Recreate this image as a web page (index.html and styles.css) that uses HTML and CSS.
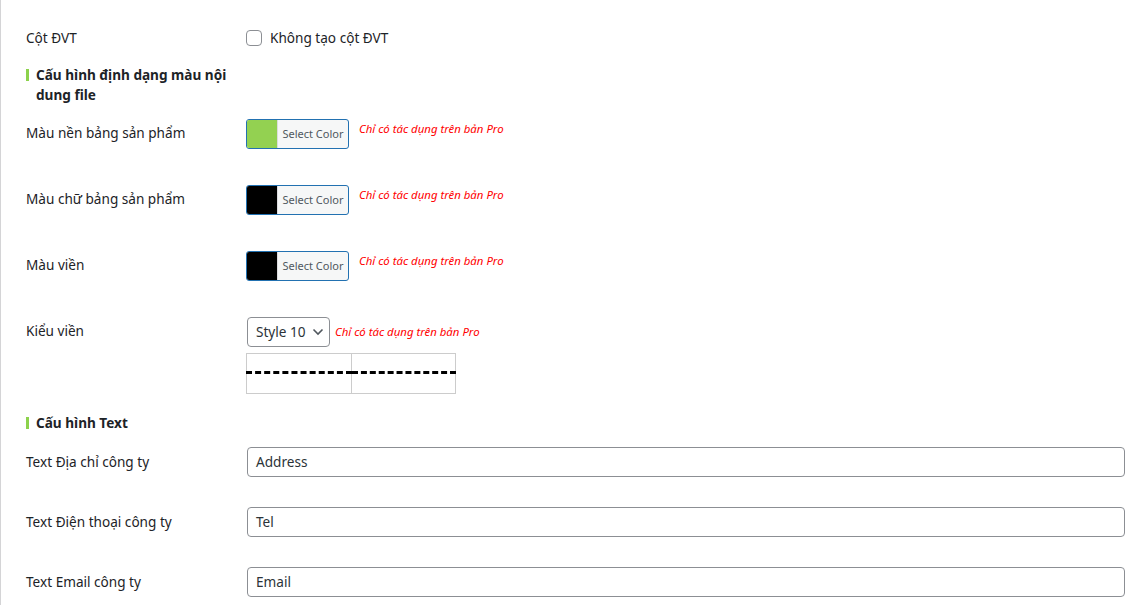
FILE: index.html
```html
<!DOCTYPE html>
<html lang="vi">
<head>
<meta charset="utf-8">
<link rel="stylesheet" href="styles.css">
</head>
<body>
<div class="page">
  <div class="row row-check">
    <div class="label">Cột ĐVT</div>
    <div class="field">
      <label class="check"><span class="box"></span><span>Không tạo cột ĐVT</span></label>
    </div>
  </div>

  <div class="heading heading-1"><span class="bar"></span><span class="heading-text">Cấu hình định dạng màu nội dung file</span></div>

  <div class="row row-color">
    <div class="label">Màu nền bảng sản phẩm</div>
    <div class="field">
      <button class="color-btn"><span class="swatch swatch-green"></span><span class="color-text">Select Color</span></button>
      <span class="pro">Chỉ có tác dụng trên bản Pro</span>
    </div>
  </div>

  <div class="row row-color">
    <div class="label">Màu chữ bảng sản phẩm</div>
    <div class="field">
      <button class="color-btn"><span class="swatch swatch-black"></span><span class="color-text">Select Color</span></button>
      <span class="pro">Chỉ có tác dụng trên bản Pro</span>
    </div>
  </div>

  <div class="row row-color">
    <div class="label">Màu viền</div>
    <div class="field">
      <button class="color-btn"><span class="swatch swatch-black"></span><span class="color-text">Select Color</span></button>
      <span class="pro">Chỉ có tác dụng trên bản Pro</span>
    </div>
  </div>

  <div class="row row-style">
    <div class="label">Kiểu viền</div>
    <div class="field field-col">
      <div class="select-line">
        <div class="select">Style 10
          <svg class="chev" width="12" height="8" viewBox="0 0 12 8"><path d="M1.5 1.5 L6 6 L10.5 1.5" fill="none" stroke="#50575e" stroke-width="1.6"/></svg>
        </div>
        <span class="pro pro-inline">Chỉ có tác dụng trên bản Pro</span>
      </div>
      <table class="preview">
        <tr class="r1"><td></td><td></td></tr>
        <tr class="r2"><td></td><td></td></tr>
      </table>
    </div>
  </div>

  <div class="heading heading-2"><span class="bar"></span><span class="heading-text">Cấu hình Text</span></div>

  <div class="row row-text">
    <div class="label">Text Địa chỉ công ty</div>
    <div class="field"><div class="input">Address</div></div>
  </div>
  <div class="row row-text">
    <div class="label">Text Điện thoại công ty</div>
    <div class="field"><div class="input">Tel</div></div>
  </div>
  <div class="row row-text">
    <div class="label">Text Email công ty</div>
    <div class="field"><div class="input">Email</div></div>
  </div>
</div>
</body>
</html>
```

FILE: styles.css
```css
* { box-sizing: border-box; }
html, body { margin: 0; padding: 0; background: #fff; }
body {
  font-family: "Noto Sans", "Open Sans", sans-serif;
  font-size: 13.6px;
  color: #1d2327;
  overflow: hidden;
}
.page {
  border-left: 1px solid #d4d4d6;
  height: 605px;
  padding-left: 25px;
  padding-right: 6px;
}
.row {
  display: flex;
}
.label {
  width: 220px;
  flex: none;
  line-height: 20px;
  padding-right: 10px;
}
.field {
  flex: 1;
  display: flex;
  align-items: flex-start;
}
.row-check { padding-top: 28px; height: 48px; }
.check { display: flex; align-items: center; gap: 8px; line-height: 20px; }
.box {
  width: 16px; height: 16px;
  border: 1px solid #8c8f94;
  border-radius: 4px;
  background: #fff;
}
.heading {
  display: flex;
  align-items: flex-start;
  font-weight: 700;
  line-height: 20px;
  width: 210px;
}
.heading-1 { margin-top: 17px; }
.heading-2 { margin-top: 19px; }
.bar {
  width: 3px;
  height: 12px;
  background: #8cd24c;
  margin-top: 4px;
  margin-right: 7px;
  flex: none;
}
.row-color { height: 66px; padding-top: 14px; }
.row-color .label { padding-top: 4px; }
.color-btn {
  display: flex;
  height: 30px;
  width: 103px;
  padding: 0;
  border: 1px solid #2271b1;
  border-radius: 3px;
  background: #f6f7f7;
  overflow: hidden;
  font-family: inherit;
}
.swatch { width: 30px; height: 100%; flex: none; }
.swatch-green { background: #93d151; }
.swatch-black { background: #000; }
.color-text {
  flex: 1;
  border-left: 1px solid #dcdcde;
  font-size: 11px;
  line-height: 28px;
  color: #50575e;
  text-align: center;
}
.pro {
  color: #ff0000;
  font-style: italic;
  font-size: 11.4px;
  line-height: 16px;
  margin-left: 10px;
  margin-top: 2px;
}
.row-style { padding-top: 14px; }
.row-style .label { padding-top: 4px; }
.field-col { flex-direction: column; }
.select-line { display: flex; align-items: center; margin-left: 1px; }
.select {
  height: 30px;
  width: 83px;
  border: 1px solid #8c8f94;
  border-radius: 4px;
  padding-left: 8px;
  line-height: 28px;
  color: #2c3338;
  display: flex;
  align-items: center;
  gap: 6px;
}
.pro-inline { margin-left: 5px; margin-top: 0; }
.preview {
  margin-top: 6px;
  border-collapse: collapse;
  width: 210px;
}
.preview td {
  border: 1px solid #cccccc;
  width: 105px;
  padding: 0;
}
.preview .r1 td { height: 19px; border-bottom: 3px dashed #000; }
.preview .r2 td { height: 21px; }
.row-text { height: 60px; padding-top: 14px; }
.row-text .label { padding-top: 5px; }
.row-text .field { padding-left: 1px; }
.input {
  width: 100%;
  height: 30px;
  border: 1px solid #8c8f94;
  border-radius: 4px;
  padding-left: 8px;
  line-height: 28px;
  color: #2c3338;
}
```
